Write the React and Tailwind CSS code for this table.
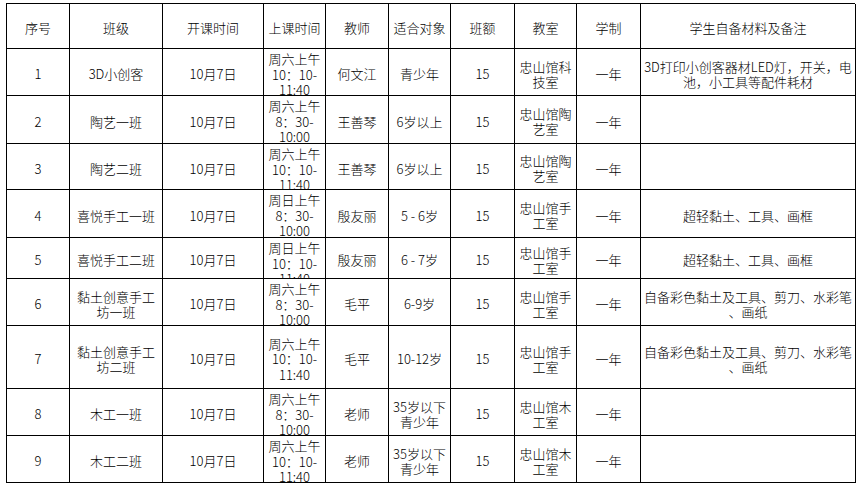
import React from "react";

const cols = "grid-cols-[63px_93px_101px_62px_63px_62px_64px_62px_64px_215px]";

const header = ["序号", "班级", "开课时间", "上课时间", "教师", "适合对象", "班额", "教室", "学制", "学生自备材料及备注"];

const T1 = ["周六上午", "10：10-", "11:40"];
const T2 = ["周六上午", "8：30-", "10:00"];
const T3 = ["周日上午", "8：30-", "10:00"];
const T4 = ["周日上午", "10：10-", "11:40"];
const N1 = ["3D打印小创客器材LED灯，开关，电", "池，小工具等配件耗材"];
const N2 = ["超轻黏土、工具、画框"];
const N3 = ["自备彩色黏土及工具、剪刀、水彩笔", "、画纸"];

const rows = [
  { h: "h-[47px]", c: ["1", ["3D小创客"], "10月7日", T1, "何文江", ["青少年"], "15", ["忠山馆科", "技室"], "一年", N1] },
  { h: "h-[48px]", c: ["2", ["陶艺一班"], "10月7日", T2, "王善琴", ["6岁以上"], "15", ["忠山馆陶", "艺室"], "一年", []] },
  { h: "h-[46px]", c: ["3", ["陶艺二班"], "10月7日", T1, "王善琴", ["6岁以上"], "15", ["忠山馆陶", "艺室"], "一年", []] },
  { h: "h-[48px]", c: ["4", ["喜悦手工一班"], "10月7日", T3, "殷友丽", ["5 - 6岁"], "15", ["忠山馆手", "工室"], "一年", N2] },
  { h: "h-[41px]", c: ["5", ["喜悦手工二班"], "10月7日", T4, "殷友丽", ["6 - 7岁"], "15", ["忠山馆手", "工室"], "一年", N2] },
  { h: "h-[47px]", c: ["6", ["黏土创意手工", "坊一班"], "10月7日", T2, "毛平", ["6-9岁"], "15", ["忠山馆手", "工室"], "一年", N3] },
  { h: "h-[63px]", tall: true, c: ["7", ["黏土创意手工", "坊二班"], "10月7日", T1, "毛平", ["10-12岁"], "15", ["忠山馆手", "工室"], "一年", N3] },
  { h: "h-[47px]", c: ["8", ["木工一班"], "10月7日", T2, "老师", ["35岁以下", "青少年"], "15", ["忠山馆木", "工室"], "一年", []] },
  { h: "h-[47px]", c: ["9", ["木工二班"], "10月7日", T1, "老师", ["35岁以下", "青少年"], "15", ["忠山馆木", "工室"], "一年", []] },
];

function Cell({ children, h }) {
  return (
    <div className={`${h} border-r border-b border-black flex flex-col items-center justify-center pt-[3px] text-center leading-[15px] overflow-hidden`}>
      {children}
    </div>
  );
}

function Lines({ lines }) {
  return lines.map((l, i) => (
    <div key={i} className="whitespace-nowrap">{l}</div>
  ));
}

export default function App() {
  return (
    <div className="w-[863px] h-[487px] bg-white pt-[3px] pl-[6px] text-black text-[13px] font-light" style={{ fontFamily: '"Noto Sans CJK SC", "Noto Sans", sans-serif' }}>
      <div className={`grid ${cols} w-[849px] border-l border-t border-black`}>
        {header.map((t, i) => (
          <Cell key={i} h="h-[45px]">
            <div className="whitespace-nowrap">{t}</div>
          </Cell>
        ))}
        {rows.map((r, ri) =>
          r.c.map((v, ci) => {
            if (ci === 3) {
              return (
                <div
                  key={`${ri}-${ci}`}
                  className={`${r.h} border-r border-b border-black flex flex-col items-center ${r.tall ? "justify-center pt-[4px]" : "justify-start pt-[2px]"} text-center leading-[15.5px] overflow-hidden`}
                >
                  <Lines lines={v} />
                </div>
              );
            }
            return (
              <Cell key={`${ri}-${ci}`} h={r.h}>
                {Array.isArray(v) ? <Lines lines={v} /> : <div className="whitespace-nowrap">{v}</div>}
              </Cell>
            );
          })
        )}
      </div>
    </div>
  );
}
